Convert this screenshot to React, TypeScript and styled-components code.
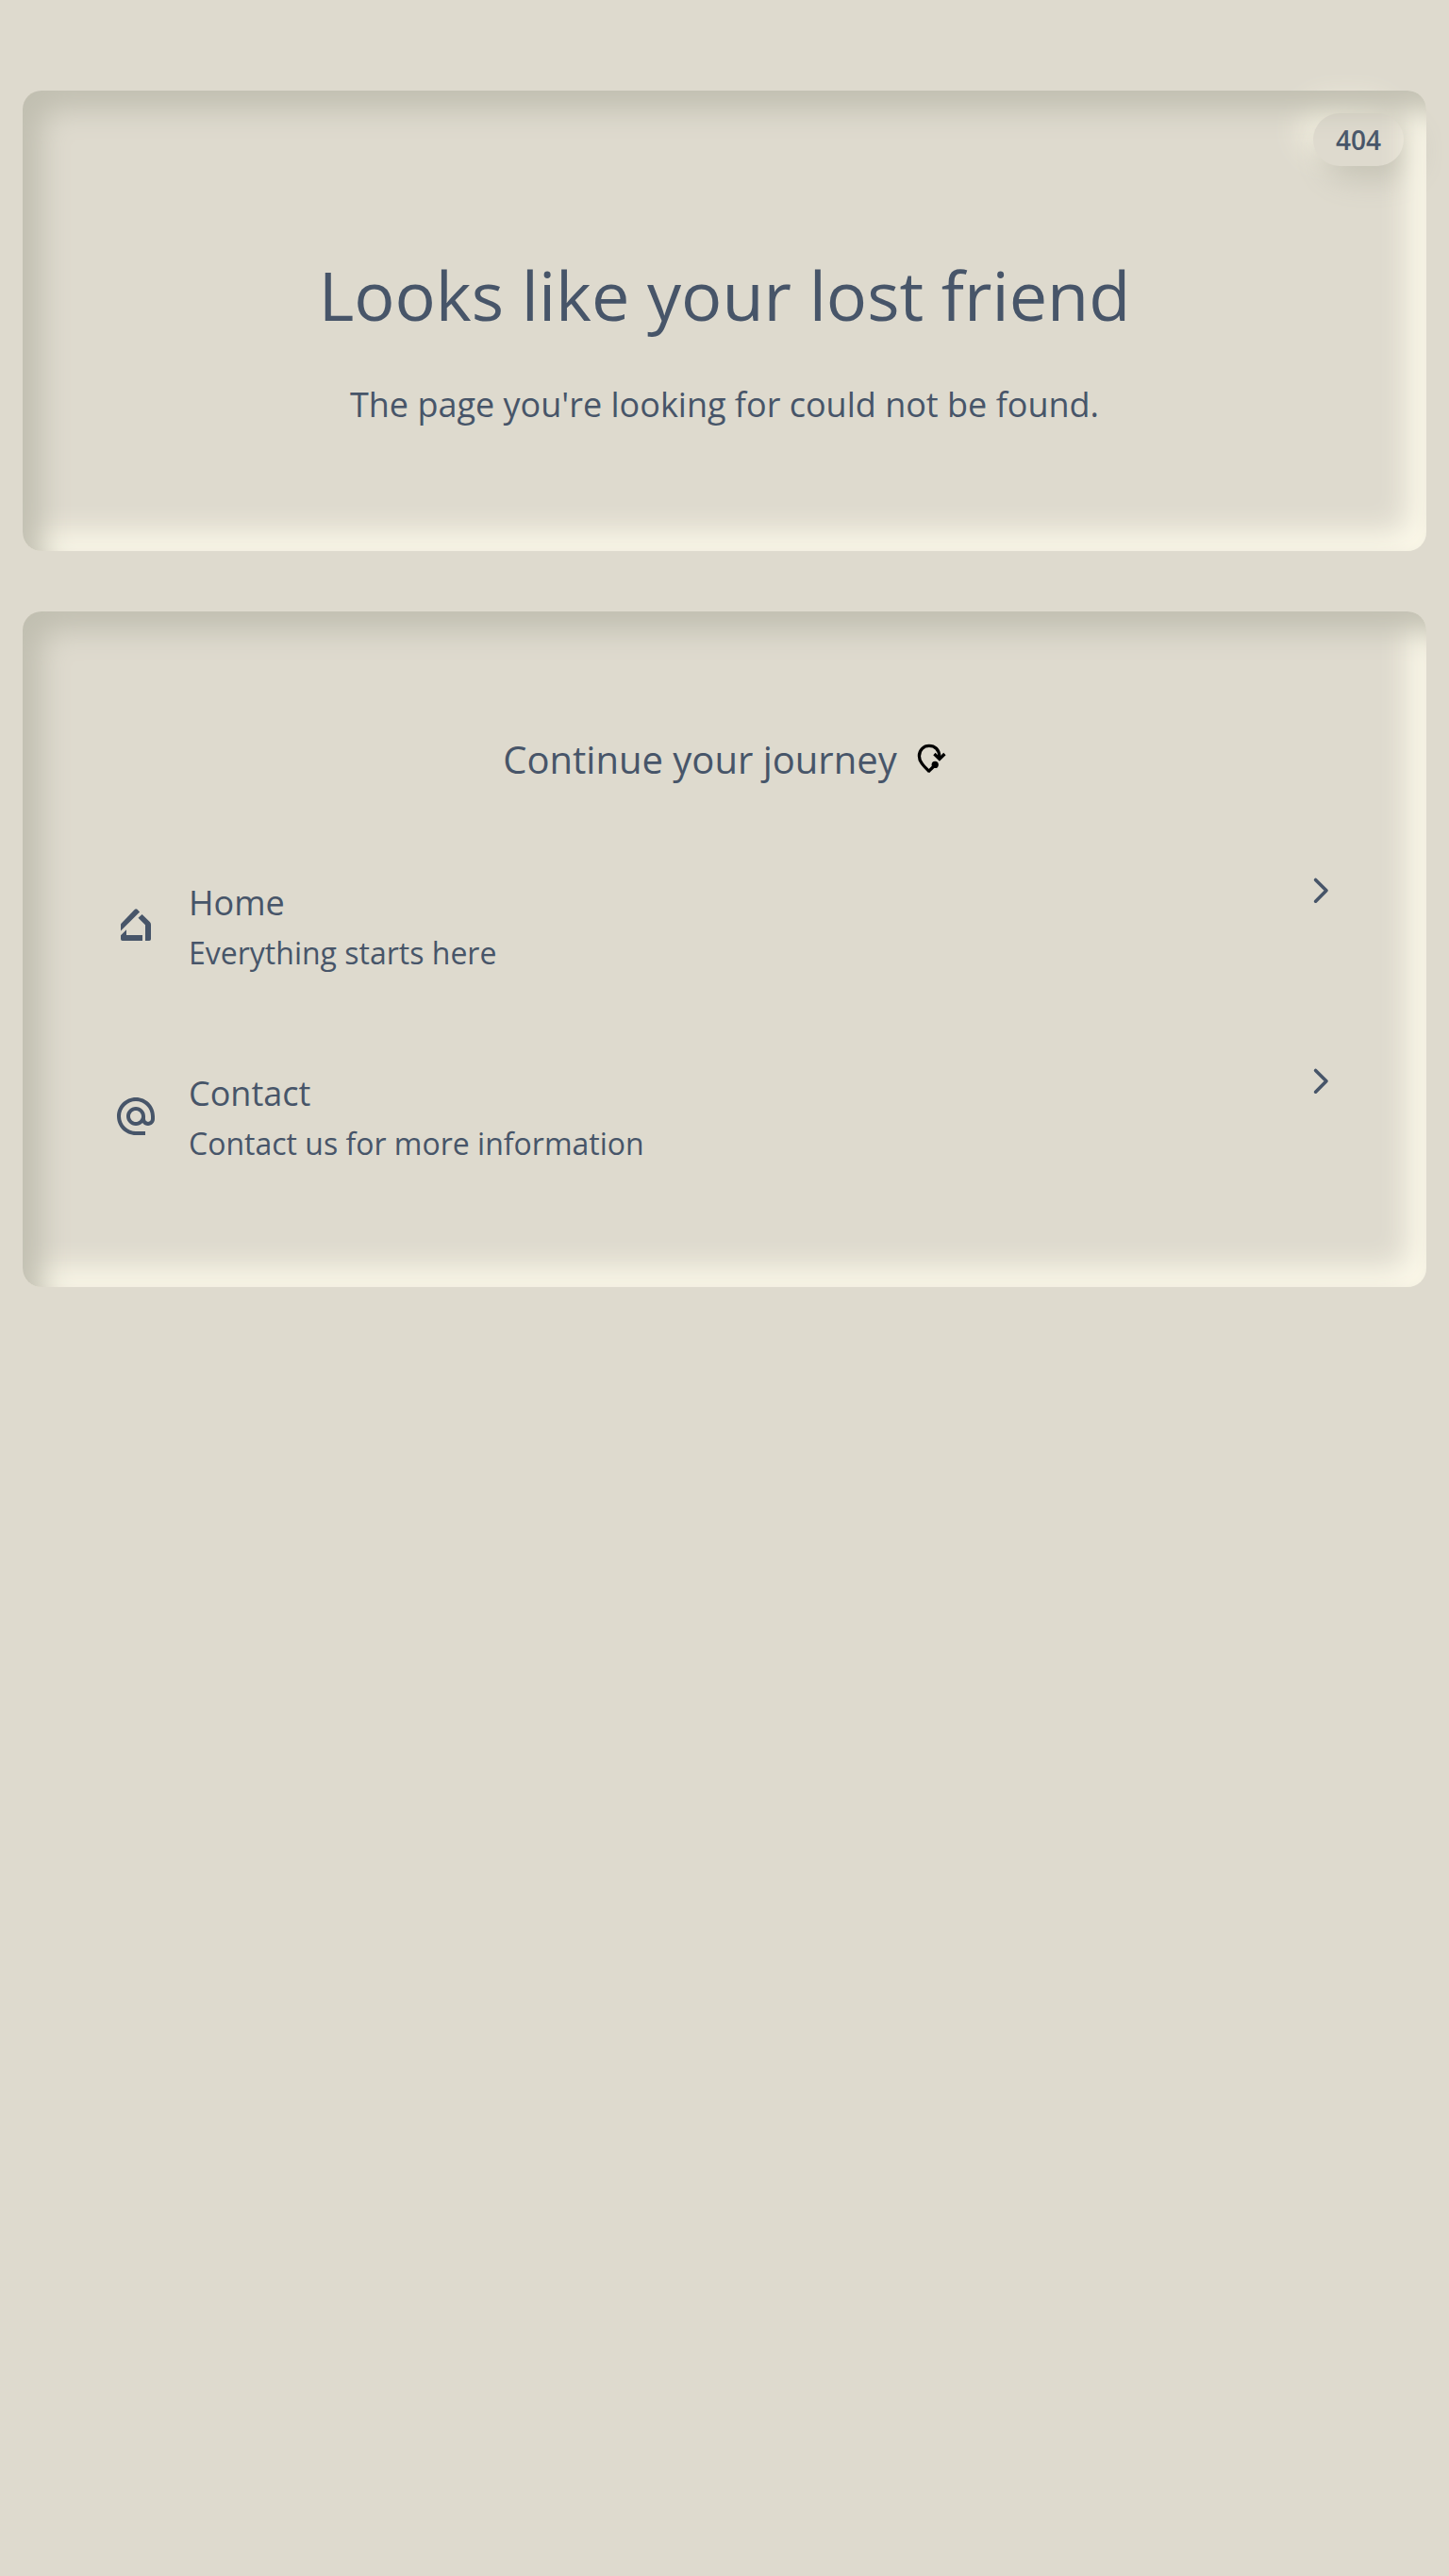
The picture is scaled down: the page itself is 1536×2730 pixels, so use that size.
import React from "react";
import styled, { createGlobalStyle } from "styled-components";
import { MdAlternateEmail } from "react-icons/md";

const GlobalStyle = createGlobalStyle`
  *, *::before, *::after { box-sizing: border-box; }
  body {
    margin: 0;
    background: #dedace;
    color: #475569;
    font-family: "Open Sans", sans-serif;
  }
  h1, h2, h3, p, ul { margin: 0; padding: 0; font-weight: 400; }
`;

const Page = styled.main`
  isolation: isolate;
  min-height: 2730px;
  padding: 96px 24px;
  display: flex;
  flex-direction: column;
  gap: 64px;
`;

const Card = styled.section<{ $height: number; $padding: string }>`
  position: relative;
  display: flex;
  flex-direction: column;
  height: ${(p) => p.$height}px;
  padding: ${(p) => p.$padding};
  border-radius: 20px;
  box-shadow: inset 20px 20px 30px #c1bfb1, inset -20px -20px 30px #fbf8e9;
`;

const Badge = styled.span`
  position: absolute;
  z-index: -1;
  top: 24px;
  right: 24px;
  padding: 8px 24px;
  border-radius: 28px;
  background: #dedace;
  font-size: 28px;
  line-height: 40px;
  font-weight: 600;
  box-shadow: 12px 12px 32px #c3c1b3, -12px -12px 32px #f8f5e5;
`;

const Title = styled.h1`
  font-size: 72px;
  line-height: 72px;
  text-align: center;
`;

const Lead = styled.p`
  margin-top: 53px;
  font-size: 36px;
  line-height: 56px;
  text-align: center;
`;

const Subheading = styled.h2`
  display: flex;
  justify-content: center;
  align-items: center;
  gap: 16px;
  font-size: 40px;
  line-height: 56px;
`;

const LinkList = styled.ul`
  display: flex;
  flex-direction: column;
  gap: 90px;
  margin-top: 96px;
  list-style: none;
`;

const LinkRow = styled.li`
  display: flex;
  align-items: flex-start;
  height: 112px;
`;

const LinkIcon = styled.span`
  display: flex;
  width: 48px;
  height: 48px;
  margin: 28px 32px 0 0;
`;

const LinkText = styled.div`
  flex: 1;
`;

const LinkTitle = styled.h3`
  font-size: 36px;
  line-height: 56px;
`;

const LinkDescription = styled.p`
  margin-top: 1px;
  font-size: 32px;
  line-height: 48px;
`;

const ChevronBox = styled.span`
  display: flex;
  margin-top: -5px;
`;

const JourneySvg = styled.svg`
  margin-top: 2px;
`;

const JourneyIcon = () => (
  <JourneySvg width="40" height="40" viewBox="0 0 40 40" fill="none" stroke="#000" strokeWidth="3.3">
    <path d="M18.2 31.7C11 24.8 7.4 20.6 7.4 15.2C7.4 8.6 12.2 4.4 17.9 4.4C24 4.4 28.6 8.4 28.7 15.5V18" />
    <path d="M23.4 13L28.9 18.5L34.4 13" />
    <path d="M17 31.9L23 26" />
    <circle cx="24.2" cy="24.4" r="3.6" fill="#000" stroke="none" />
  </JourneySvg>
);

const HomeIcon = () => (
  <svg width="48" height="48" viewBox="0 0 48 48" fill="#475569">
    <path d="M8 22.2L22.6 7.1Q24.2 5.5 25.8 7.1L28.1 9.5L8 29.4Z" />
    <path d="M30.6 11.9L38.8 20.1Q40 21.3 40 23V38.2Q40 40 38.2 40H34V23.2L26.5 15.7Z" />
    <path d="M14 28.3V34H31V40H9.8Q8 40 8 38.2V34.2Z" />
  </svg>
);

const Chevron = () => (
  <svg width="40" height="40" viewBox="0 0 40 40" fill="none" stroke="#475569" strokeWidth="3.6" strokeLinecap="round" strokeLinejoin="round">
    <path d="M14.6 8.4L26 19.8L14.6 31.2" />
  </svg>
);

const links = [
  { title: "Home", text: "Everything starts here", icon: <HomeIcon /> },
  { title: "Contact", text: "Contact us for more information", icon: <MdAlternateEmail size={48} /> },
];

export default function App() {
  return (
    <>
      <GlobalStyle />
      <Page>
        <Card $height={488} $padding="180px 96px 0">
          <Badge>404</Badge>
          <Title>Looks like your lost friend</Title>
          <Lead>The page you're looking for could not be found.</Lead>
        </Card>
        <Card $height={716} $padding="129px 92px 0 96px">
          <Subheading>
            Continue your journey
            <JourneyIcon />
          </Subheading>
          <LinkList>
            {links.map((link) => (
              <LinkRow key={link.title}>
                <LinkIcon>{link.icon}</LinkIcon>
                <LinkText>
                  <LinkTitle>{link.title}</LinkTitle>
                  <LinkDescription>{link.text}</LinkDescription>
                </LinkText>
                <ChevronBox>
                  <Chevron />
                </ChevronBox>
              </LinkRow>
            ))}
          </LinkList>
        </Card>
      </Page>
    </>
  );
}
